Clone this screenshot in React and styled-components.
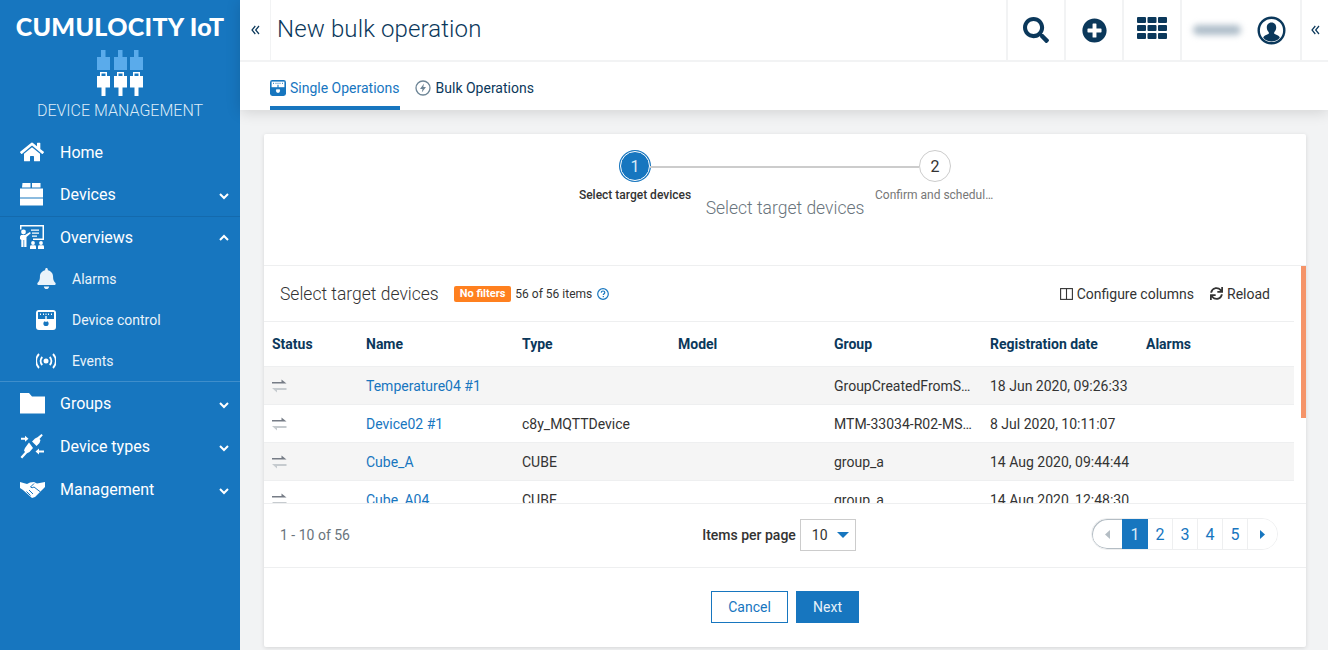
import React from "react";
import styled, { createGlobalStyle } from "styled-components";
import { FaHome, FaBell, FaSearch, FaPlusCircle, FaSync } from "react-icons/fa";

const Global = createGlobalStyle`
  html, body { margin: 0; padding: 0; height: 100%; overflow: hidden; }
  body { font-family: Roboto, "Liberation Sans", sans-serif; background: #f2f3f4; color: #333; }
  * { box-sizing: border-box; }
`;

const BLUE = "#1776bf";
const NAVY = "#0b385b";

const Shell = styled.div`display: flex; width: 1328px; height: 650px; overflow: hidden;`;

const Sidebar = styled.aside`width: 240px; flex: none; background: ${BLUE}; color: #fff; display: flex; flex-direction: column;`;
const Brand = styled.div`height: 131px; display: flex; flex-direction: column; align-items: center; padding-top: 12px;`;
const BrandName = styled.div`font-family: Lato, sans-serif; font-weight: 900; font-size: 25px; line-height: 28px; letter-spacing: 0.3px; white-space: nowrap;`;
const BrandMark = styled.svg`display: block; margin-top: 10px;`;
const BrandSub = styled.div`font-size: 16px; font-weight: 300; line-height: 20px; margin-top: 4px; color: #dcebf7; white-space: nowrap;`;

const NavRow = styled.div`height: 43px; display: flex; align-items: center; padding: 0 11px 0 20px; font-size: 16px; color: #fff;`;
const HomeRow = styled(NavRow)`height: 42px;`;
const NavIcon = styled.span`width: 40px; flex: none; display: flex; align-items: center;`;
const NavLabel = styled.span`flex: 1;`;
const Caret = styled.svg`display: block; margin-top: ${p => (p.$up ? 0 : "3px")};`;
const SubGroup = styled.div`
  border-top: 1px solid #146aad;
  border-bottom: 1px solid #3f8ecb;
  height: 166px;
`;
const SubRow = styled.div`height: 41px; display: flex; align-items: center; padding-left: 36px; font-size: 14px; color: #eaf3fa;`;
const SubIcon = styled.span`width: 36px; flex: none; display: flex; align-items: center;`;
const OverviewRow = styled(NavRow)`height: 41px;`;

const Main = styled.main`flex: 1; min-width: 0; display: flex; flex-direction: column;`;
const TopBox = styled.div`background: #fff; box-shadow: 0 2px 14px rgba(0,0,0,.14); position: relative;`;
const Header = styled.header`height: 62px; display: flex; align-items: stretch; border-bottom: 2px solid #f2f3f4;`;
const Collapse = styled.div`width: 31px; flex: none; display: flex; align-items: center; justify-content: center; color: ${NAVY}; border-right: 1px solid #f2f3f4; height: 60px;`;
const Title = styled.h1`flex: 1; margin: 0; padding-left: 6px; font-size: 24px; font-weight: 300; letter-spacing: 0.12px; line-height: 58px; color: ${NAVY};`;
const HeadCell = styled.div`width: 58px; flex: none; border-left: 2px solid #f2f3f4; display: flex; align-items: center; justify-content: center; color: ${NAVY};`;
const UserCell = styled(HeadCell)`width: 120px; justify-content: flex-start; padding-left: 11px; gap: 16px;`;
const EndCell = styled(HeadCell)`width: 28px;`;
const Blurred = styled.span`display: block; width: 48px; height: 10px; border-radius: 5px; background: #aebdc9; filter: blur(3px);`;

const Tabs = styled.nav`height: 48px; display: flex; padding-left: 30px; gap: 15px;`;
const Tab = styled.div`
  display: flex; align-items: center; gap: 4px; font-size: 14px; padding-top: 8px;
  color: ${p => (p.$active ? BLUE : NAVY)};
  border-bottom: 4px solid ${p => (p.$active ? BLUE : "transparent")};
`;

const Content = styled.div`flex: 1; min-height: 0; padding: 24px 22px 3px 24px;`;
const Card = styled.section`height: 513px; background: #fff; box-shadow: 0 1px 4px rgba(0,0,0,.12); border-radius: 2px; display: flex; flex-direction: column;`;

const StepSection = styled.div`height: 132px; flex: none; border-bottom: 1px solid #eeeff0; padding-top: 16px; display: flex; flex-direction: column; align-items: center;`;
const Track = styled.div`width: 332px; display: flex; align-items: center;`;
const StepDot = styled.div`
  flex: none; width: ${p => (p.$active ? "30px" : "32px")}; height: ${p => (p.$active ? "30px" : "32px")};
  margin-left: ${p => (p.$active ? "1px" : 0)};
  border-radius: 50%; display: flex; align-items: center; justify-content: center; font-size: 16px;
  background: ${p => (p.$active ? BLUE : "#fff")}; color: ${p => (p.$active ? "#dcebf7" : "#333")};
  border: ${p => (p.$active ? "1px solid #fff" : "1px solid #ccc")};
  box-shadow: ${p => (p.$active ? `0 0 0 1px ${BLUE}` : "none")};
`;
const StepLine = styled.div`flex: 1; height: 2px; background: #ccc; margin-top: 1px;`;
const StepLabels = styled.div`width: 420px; display: flex; justify-content: space-between; margin-top: 5px;`;
const StepLabel = styled.div`width: 120px; text-align: center; font-size: 12px; line-height: 16px; white-space: nowrap; padding-right: ${p => (p.$active ? 0 : "2px")}; font-weight: ${p => (p.$active ? 500 : 400)}; color: ${p => (p.$active ? "#333" : "#777")};`;
const StepTitle = styled.div`font-size: 17.5px; font-weight: 300; line-height: 22px; color: #69747c; margin-top: -6px;`;

const Panel = styled.div`position: relative; height: 237px; flex: none; padding-right: 12px; display: flex; flex-direction: column;`;
const Scrollbar = styled.div`position: absolute; top: 0; right: 0; width: 5px; height: 152px; background: #f59469;`;
const PanelHead = styled.div`height: 56px; flex: none; display: flex; align-items: center; padding: 0 24px 0 16px; border-bottom: 1px solid #eeeff0;`;
const PanelTitle = styled.div`font-size: 17.5px; font-weight: 300; color: #333; margin-right: 15px;`;
const Badge = styled.span`background: #ff801f; color: #fff; font-size: 11px; font-weight: 700; height: 16px; line-height: 16px; border-radius: 2px; padding: 0 6px; margin-right: 4px;`;
const Count = styled.span`font-size: 12px; color: #333; margin-right: 5px;`;
const Actions = styled.div`margin-left: auto; display: flex; gap: 16px;`;
const ActionBtn = styled.div`display: flex; align-items: center; gap: 4px; font-size: 14px; color: #333;`;

const Scroller = styled.div`flex: 1; min-height: 0; overflow: hidden;`;
const Table = styled.table`width: 1030px; table-layout: fixed; border-collapse: collapse; font-size: 14px;`;
const Th = styled.th`height: 44px; text-align: left; padding: 0 8px; font-weight: 700; color: ${NAVY}; width: ${p => p.$w}px;`;
const Tr = styled.tr`background: ${p => (p.$odd ? "#f5f5f5" : "#fff")}; border-top: 1px solid #eeeff0;`;
const Td = styled.td`height: 38px; padding: 2px 8px 0; white-space: nowrap; color: #333;`;
const CellLink = styled.span`color: ${BLUE};`;

const Footer = styled.div`height: 65px; flex: none; position: relative; display: grid; grid-template-columns: 1fr auto 1fr; align-items: center; padding: 0 28px 0 16px; border-top: 1px solid #eeeff0; border-bottom: 1px solid #eeeff0;`;
const Range = styled.div`font-size: 14px; color: #69747c; margin-top: -1px;`;
const PerPage = styled.div`display: flex; align-items: center; gap: 4px; font-size: 14px; font-weight: 500; color: #333; margin-top: -1px;`;
const SelectBox = styled.div`width: 56px; height: 32px; border: 1px solid #ccc; display: flex; align-items: center; justify-content: space-between; padding: 0 6px 0 11px; font-weight: 400; color: #333;`;
const Pager = styled.div`justify-self: end; height: 32px; margin-top: -3px; display: flex; border: 1px solid #eeeff0; border-radius: 16px; overflow: hidden;`;
const PageCell = styled.div`
  width: ${p => p.$w || 25}px; display: flex; align-items: center; justify-content: center; font-size: 16px;
  border-left: ${p => (p.$first ? "none" : "1px solid #eeeff0")};
  background: ${p => (p.$active ? BLUE : "#fff")}; color: ${p => (p.$active ? "#dcebf7" : BLUE)};
`;
const PrevCell = styled(PageCell)`border-radius: 16px 0 0 16px; box-shadow: inset 1px 1px 0 #b4bdc4, inset 0 -1px 0 #b4bdc4;`;

const BtnRow = styled.div`flex: 1; display: flex; justify-content: center; align-items: center; gap: 8px; padding-bottom: 1px;`;
const Button = styled.div`
  height: 32px; width: ${p => p.$w}px; display: flex; align-items: center; justify-content: center; font-size: 14px;
  border: 1px solid ${BLUE};
  background: ${p => (p.$primary ? BLUE : "#fff")}; color: ${p => (p.$primary ? "#e6f1f9" : BLUE)};
`;
const GridSvg = styled.svg`display: block; margin-bottom: 4px;`;
const BoltSvg = styled.svg`display: block; margin-right: 1px;`;

const DblLeft = ({ c }) => (
  <svg width="9" height="10" viewBox="0 0 9 10" fill="none" stroke={c} strokeWidth="1.2">
    <polyline points="4.3,1 1,5 4.3,9" /><polyline points="8,1 4.7,5 8,9" />
  </svg>
);
const Chevron = ({ up }) => (
  <Caret $up={up} width="10" height="7" viewBox="0 0 10 7" fill="none" stroke="#fff" strokeWidth="2">
    <polyline points={up ? "1,6 5,2 9,6" : "1,1 5,5 9,1"} />
  </Caret>
);
const Plug = ({ x }) => (
  <g>
    <rect x={x + 4} y="0" width="4.5" height="8" fill="#5aabeb" />
    <rect x={x} y="7" width="13" height="13" fill="#5aabeb" />
    <path d={`M${x + 3} 22h7v4h3V37.500H${x + 8.5}v8.500h-4v-8.500H${x}V26h3z`} fill="#fff" />
    <rect x={x + 4.5} y="23.500" width="4" height="2.500" fill="#1776bf" />
  </g>
);
const LogoMark = () => (
  <BrandMark width="46" height="47" viewBox="0 0 46 47"><Plug x={0} /><Plug x={17} /><Plug x={33} /></BrandMark>
);
const DevicesIcon = () => (
  <svg width="23" height="23" viewBox="0 0 23 23" fill="#fff" style={{ display: "block" }}>
    <path d="M2.500 0h8v4.500H2zM12 0h8.500v4.500H12z" /><rect x="0" y="5.500" width="23" height="9" /><rect x="0" y="15.500" width="23" height="7" />
  </svg>
);
const OverviewIcon = () => (
  <svg width="25" height="25" viewBox="0 0 25 25" style={{ display: "block" }}>
    <path d="M0 0h24v15h-11v-1.500h9.500V1.500H1.500v3H0z" fill="#fff" />
    <path d="M11 4.500h8v1.300h-8zM12 7.500h7v1.300h-7zM12 10.500h5v1.300h-5z" fill="#fff" />
    <circle cx="3.500" cy="7" r="2.400" fill="#fff" />
    <path d="M1 10h4l5-3 .8 1.200L6.500 12v10H4.200v-7H3.500v7H1.300v-7L0 14v-2.500z" fill="#fff" />
    <circle cx="13" cy="18" r="1.900" fill="#fff" /><path d="M10 24v-2.500q0-1.300 1.300-1.300h3.400q1.300 0 1.300 1.300V24z" fill="#fff" />
    <circle cx="21" cy="18" r="1.900" fill="#fff" /><path d="M18 24v-2.500q0-1.300 1.300-1.300h3.400q1.300 0 1.300 1.300V24z" fill="#fff" />
  </svg>
);
const ControlIcon = ({ size = 20, fg = "#fff", bg = BLUE }) => (
  <svg width={size} height={size} viewBox="0 0 20 20" style={{ display: "block" }}>
    <rect x="0" y="0" width="20" height="20" rx="3" fill={fg} />
    <rect x="2" y="2" width="16" height="7" fill={bg} />
    <path d="M4 3.500h1v1.500H4zM7 3.500h1v1.500H7zM9.500 3.500h1v1.500h-1zM12 3.500h1v1.500h-1zM15 3.500h1v1.500h-1z" fill={fg} />
    <circle cx="10" cy="13.500" r="2.600" fill={bg} />
    <rect x="9.300" y="6" width="1.400" height="6" fill={fg} />
  </svg>
);
const EventsIcon = () => (
  <svg width="20" height="16" viewBox="0 0 20 16" fill="none" stroke="#fff" strokeWidth="1.800" style={{ display: "block" }}>
    <circle cx="10" cy="8" r="2.500" fill="#fff" stroke="none" />
    <path d="M6.300 4a5.500 5.500 0 0 0 0 8M13.700 4a5.500 5.500 0 0 1 0 8M3 1a10 10 0 0 0 0 14M17 1a10 10 0 0 1 0 14" />
  </svg>
);
const FolderIcon = () => (
  <svg width="25" height="21" viewBox="0 0 25 21" style={{ display: "block" }}>
    <path d="M0 0h9l3 3.500h13V20.500H0z" fill="#fff" />
  </svg>
);
const TypesIcon = () => (
  <svg width="25" height="25" viewBox="0 0 25 25" fill="#fff" style={{ display: "block" }}>
    <path d="M12 7.500l3-3 2.500-1.200L21.500 0l1.300 1.300L19.500 5l1 1-1 3-3 3-1.200-1.200L12 7.500z" />
    <path d="M9 8.500L13 14l-3.500 4-2.500 1.200L2.200 24.500 .5 23l4.500-5-1-1.500 1-2.500z" />
    <path d="M1 3.800h4V1.700l3.500 3-3.500 3V5.800H1zM24 16.500h-5v-2l-3.500 3 3.500 3v-2h5z" />
  </svg>
);
const ShakeIcon = () => (
  <svg width="25" height="17" viewBox="0 0 25 17" style={{ display: "block" }}>
    <path d="M0 1l7 2 3-1.500 4-.5 3 1.500L25 1v5l-3 3-7 7-3 1-9-8-3-2z" fill="#fff" />
    <path d="M14 2.500L10.500 6q1.500 1.500 3.500 0l6.500 5M9 9l4 4M6.500 10.500l4 4" fill="none" stroke={BLUE} strokeWidth="1" />
  </svg>
);
const GridIcon = () => (
  <GridSvg width="30" height="22" viewBox="0 0 30 22" fill={NAVY}>
    {[0, 8, 16].map(y => [0, 10.500, 21].map(x => <rect key={`${x}-${y}`} x={x} y={y} width="9" height="6" rx="1" />))}
  </GridSvg>
);
const UserIcon = () => (
  <svg width="29" height="29" viewBox="0 0 29 29" style={{ display: "block" }}>
    <circle cx="14.500" cy="14.500" r="12.800" fill="#fff" stroke={NAVY} strokeWidth="2.400" />
    <path d="M14.500 6.500c3.200 0 4.700 2.400 4.700 5 0 2-.9 3.800-2 4.700v1.600l3.800 1.700c1 .5 1.600 1.200 1.800 2.200a11 11 0 0 1-16.600 0c.2-1 .8-1.700 1.800-2.200l3.800-1.700v-1.600c-1.100-.9-2-2.700-2-4.700 0-2.600 1.500-5 4.700-5z" fill={NAVY} />
  </svg>
);
const BoltIcon = () => (
  <BoltSvg width="16" height="16" viewBox="0 0 16 16">
    <circle cx="8" cy="8" r="7" fill="none" stroke="#6d8596" strokeWidth="1.300" />
    <path d="M9 3.500L5 9h2.500L6.800 12.500 11 7H8.300z" fill="#6d8596" />
  </BoltSvg>
);
const HelpIcon = () => (
  <svg width="12" height="12" viewBox="0 0 12 12" style={{ display: "block" }}>
    <circle cx="6" cy="6" r="5.300" fill="none" stroke={BLUE} strokeWidth="1.200" />
    <path d="M4.200 4.600C4.300 3.600 5 3 6 3s1.800.6 1.800 1.500c0 1.300-1.500 1.300-1.500 2.600" fill="none" stroke={BLUE} strokeWidth="1.200" />
    <rect x="5.700" y="8" width="1.200" height="1.200" fill={BLUE} />
  </svg>
);
const ColumnsIcon = () => (
  <svg width="13" height="12" viewBox="0 0 13 12" fill="none" stroke="#333" strokeWidth="1.100" style={{ display: "block" }}>
    <rect x=".6" y=".6" width="11.800" height="10.800" /><path d="M6.500 .6v10.800" />
  </svg>
);
const StatusIcon = () => (
  <svg width="15" height="14" viewBox="0 0 15 14" style={{ display: "block" }}>
    <path d="M0 3h9.500V.5L14.500 4.500H0z" fill="#767c86" />
    <path d="M14.500 9H0l5 4.500V11h9.500z" fill="#c6cbcf" />
  </svg>
);
const Tri = ({ c, left }) => (
  <svg width="6" height="9" viewBox="0 0 6 9" style={{ display: "block" }}>
    <polygon points={left ? "6,0 6,9 1,4.500" : "0,0 0,9 5,4.500"} fill={c} />
  </svg>
);

const rows = [
  ["Temperature04 #1", "", "", "GroupCreatedFromS…", "18 Jun 2020, 09:26:33"],
  ["Device02 #1", "c8y_MQTTDevice", "", "MTM-33034-R02-MS…", "8 Jul 2020, 10:11:07"],
  ["Cube_A", "CUBE", "", "group_a", "14 Aug 2020, 09:44:44"],
  ["Cube_A04", "CUBE", "", "group_a", "14 Aug 2020, 12:48:30"],
];

export default function App() {
  return (
    <Shell>
      <Global />
      <Sidebar>
        <Brand>
          <BrandName>CUMULOCITY IoT</BrandName>
          <LogoMark />
          <BrandSub>DEVICE MANAGEMENT</BrandSub>
        </Brand>
        <HomeRow><NavIcon><FaHome size={24} /></NavIcon><NavLabel>Home</NavLabel></HomeRow>
        <NavRow><NavIcon><DevicesIcon /></NavIcon><NavLabel>Devices</NavLabel><Chevron /></NavRow>
        <SubGroup>
          <OverviewRow><NavIcon><OverviewIcon /></NavIcon><NavLabel>Overviews</NavLabel><Chevron up /></OverviewRow>
          <SubRow><SubIcon><FaBell size={21} /></SubIcon>Alarms</SubRow>
          <SubRow><SubIcon><ControlIcon /></SubIcon>Device control</SubRow>
          <SubRow><SubIcon><EventsIcon /></SubIcon>Events</SubRow>
        </SubGroup>
        <NavRow><NavIcon><FolderIcon /></NavIcon><NavLabel>Groups</NavLabel><Chevron /></NavRow>
        <NavRow><NavIcon><TypesIcon /></NavIcon><NavLabel>Device types</NavLabel><Chevron /></NavRow>
        <NavRow><NavIcon><ShakeIcon /></NavIcon><NavLabel>Management</NavLabel><Chevron /></NavRow>
      </Sidebar>
      <Main>
        <TopBox>
          <Header>
            <Collapse><DblLeft c={NAVY} /></Collapse>
            <Title>New bulk operation</Title>
            <HeadCell><FaSearch size={26} /></HeadCell>
            <HeadCell><FaPlusCircle size={25} /></HeadCell>
            <HeadCell><GridIcon /></HeadCell>
            <UserCell><Blurred /><UserIcon /></UserCell>
            <EndCell><DblLeft c={NAVY} /></EndCell>
          </Header>
          <Tabs>
            <Tab $active><ControlIcon size={16} fg={BLUE} bg="#fff" />Single Operations</Tab>
            <Tab><BoltIcon />Bulk Operations</Tab>
          </Tabs>
        </TopBox>
        <Content>
          <Card>
            <StepSection>
              <Track>
                <StepDot $active>1</StepDot>
                <StepLine />
                <StepDot>2</StepDot>
              </Track>
              <StepLabels>
                <StepLabel $active>Select target devices</StepLabel>
                <StepLabel>Confirm and schedul…</StepLabel>
              </StepLabels>
              <StepTitle>Select target devices</StepTitle>
            </StepSection>
            <Panel>
              <Scrollbar />
              <PanelHead>
                <PanelTitle>Select target devices</PanelTitle>
                <Badge>No filters</Badge>
                <Count>56 of 56 items</Count>
                <HelpIcon />
                <Actions>
                  <ActionBtn><ColumnsIcon />Configure columns</ActionBtn>
                  <ActionBtn><FaSync size={13} />Reload</ActionBtn>
                </Actions>
              </PanelHead>
              <Scroller>
                <Table>
                  <thead>
                    <tr>
                      <Th $w={94}>Status</Th><Th $w={156}>Name</Th><Th $w={156}>Type</Th><Th $w={156}>Model</Th>
                      <Th $w={156}>Group</Th><Th $w={156}>Registration date</Th><Th $w={156}>Alarms</Th>
                    </tr>
                  </thead>
                  <tbody>
                    {rows.map((r, i) => (
                      <Tr key={r[0]} $odd={i % 2 === 0}>
                        <Td><StatusIcon /></Td>
                        <Td><CellLink>{r[0]}</CellLink></Td>
                        <Td>{r[1]}</Td>
                        <Td>{r[2]}</Td>
                        <Td>{r[3]}</Td>
                        <Td>{r[4]}</Td>
                        <Td />
                      </Tr>
                    ))}
                  </tbody>
                </Table>
              </Scroller>
            </Panel>
            <Footer>
              <Range>1 - 10 of 56</Range>
              <PerPage>
                Items per page
                <SelectBox>10
                  <svg width="12" height="6" viewBox="0 0 12 6"><polygon points="0,0 12,0 6,6" fill={BLUE} /></svg>
                </SelectBox>
              </PerPage>
              <Pager>
                <PrevCell $first $w={30}><Tri c="#b4bdc4" left /></PrevCell>
                <PageCell $first $active $w={26}>1</PageCell>
                <PageCell $first $w={24}>2</PageCell>
                <PageCell>3</PageCell>
                <PageCell>4</PageCell>
                <PageCell>5</PageCell>
                <PageCell $w={30}><Tri c={BLUE} /></PageCell>
              </Pager>
            </Footer>
            <BtnRow>
              <Button $w={77}>Cancel</Button>
              <Button $w={63} $primary>Next</Button>
            </BtnRow>
          </Card>
        </Content>
      </Main>
    </Shell>
  );
}
